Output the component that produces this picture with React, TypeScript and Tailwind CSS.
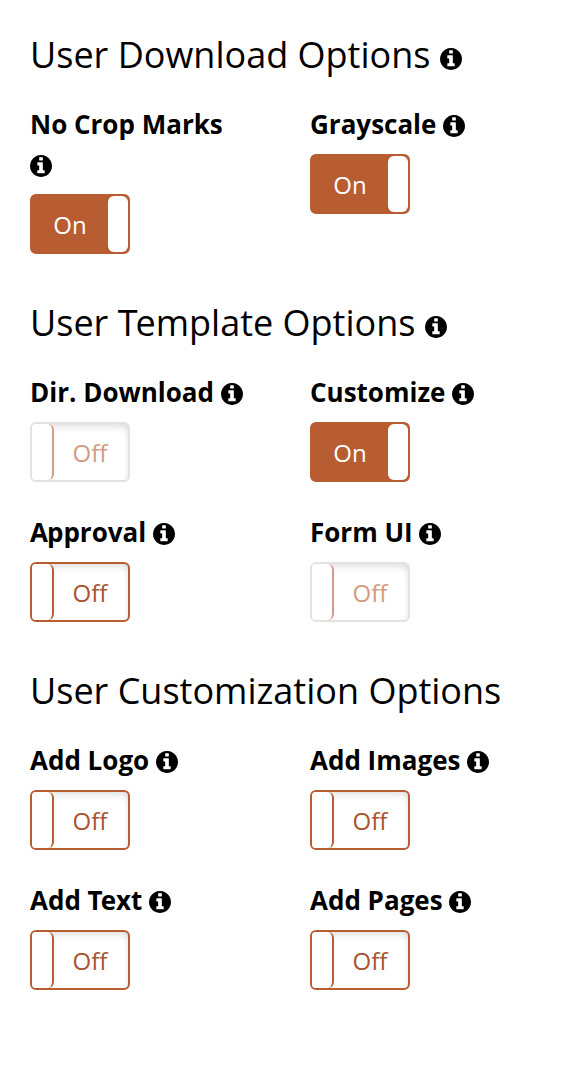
import React from 'react';

const InfoIcon = ({ className }: { className?: string }) => (
  <svg viewBox="128 128 1536 1536" fill="currentColor" className={`inline-block h-[22px] w-[22px] ${className ?? ''}`}>
    <path d="M1152 1376v-160q0-14-9-23t-23-9h-96v-512q0-14-9-23t-23-9h-320q-14 0-23 9t-9 23v160q0 14 9 23t23 9h96v320h-96q-14 0-23 9t-9 23v160q0 14 9 23t23 9h448q14 0 23-9t9-23zm-128-896v-160q0-14-9-23t-23-9h-192q-14 0-23 9t-9 23v160q0 14 9 23t23 9h192q14 0 23-9t9-23zm640 416q0 209-103 385.5t-279.5 279.5-385.5 103-385.5-103-279.5-279.5-103-385.5 103-385.5 279.5-279.5 385.5-103 385.5 103 279.5 279.5 103 385.5z" />
  </svg>
);

const Toggle = ({ on, faded }: { on?: boolean; faded?: boolean }) => {
  if (on) {
    return (
      <div className="flex h-[60px] w-[100px] items-center overflow-hidden rounded-[6px] border-2 border-[#b85c32] bg-[#b85c32]">
        <span className="flex-1 pt-[2px] text-center text-[24px] leading-none font-medium text-white">On</span>
        <span className="h-full w-[20px] rounded-[6px] bg-white" />
      </div>
    );
  }
  return (
    <div className={`flex h-[60px] w-[100px] items-center overflow-hidden rounded-[6px] border-2 bg-white shadow-[inset_0_6px_8px_-4px_rgba(0,0,0,0.14),inset_-4px_0_6px_-4px_rgba(0,0,0,0.08)] ${faded ? 'border-[#e2e2e2]' : 'border-[#b85c32]'}`}>
      <span className={`h-full w-[22px] rounded-r-[6px] border-r-2 bg-white ${faded ? 'border-[#d49a82]' : 'border-[#b85c32]'}`} />
      <span className={`flex-1 pt-[2px] pr-[2px] text-center text-[24px] leading-none ${faded ? 'text-[#d49a82]' : 'text-[#a9542e]'}`}>Off</span>
    </div>
  );
};

const Option = ({ label, on, faded, wrap }: { label: React.ReactNode; on?: boolean; faded?: boolean; wrap?: boolean }) => (
  <div>
    <div className="-mt-px mb-[10px] w-[260px] text-[26px] leading-[40px] font-bold text-black">
      {label}{wrap ? <br /> : ' '}
      <InfoIcon className="align-[-3px]" />
    </div>
    <Toggle on={on} faded={faded} />
  </div>
);

const Section = ({ title, info, children }: { title: React.ReactNode; info?: boolean; children: React.ReactNode }) => (
  <section className="mb-[49px]">
    <h2 className="mb-[30px] h-[40px] text-[36px] leading-[40px] font-normal text-black">
      {title}
      {info && <InfoIcon className="ml-[10px] align-[-2px]" />}
    </h2>
    <div className="grid grid-cols-[280px_280px] gap-y-[31px]">{children}</div>
  </section>
);

const App = () => {
  return (
    <div className="min-h-[1082px] bg-white pt-[35px] pl-[30px] font-['Open_Sans',sans-serif]">
      <Section title="User Download Options" info>
        <Option label="No Crop Marks" on wrap />
        <Option label="Grayscale" on />
      </Section>
      <Section title={<>User <span className="tracking-[-2px]">T</span>emplate Options</>} info>
        <Option label="Dir. Download" faded />
        <Option label="Customize" on />
        <Option label={<><span className="tracking-[-1px]">A</span>pproval</>} />
        <Option label="Form UI" faded />
      </Section>
      <Section title="User Customization Options">
        <Option label="Add Logo" />
        <Option label="Add Images" />
        <Option label={<>Add <span className="tracking-[-2px]">T</span>ext</>} />
        <Option label="Add Pages" />
      </Section>
    </div>
  );
};

export default App;
